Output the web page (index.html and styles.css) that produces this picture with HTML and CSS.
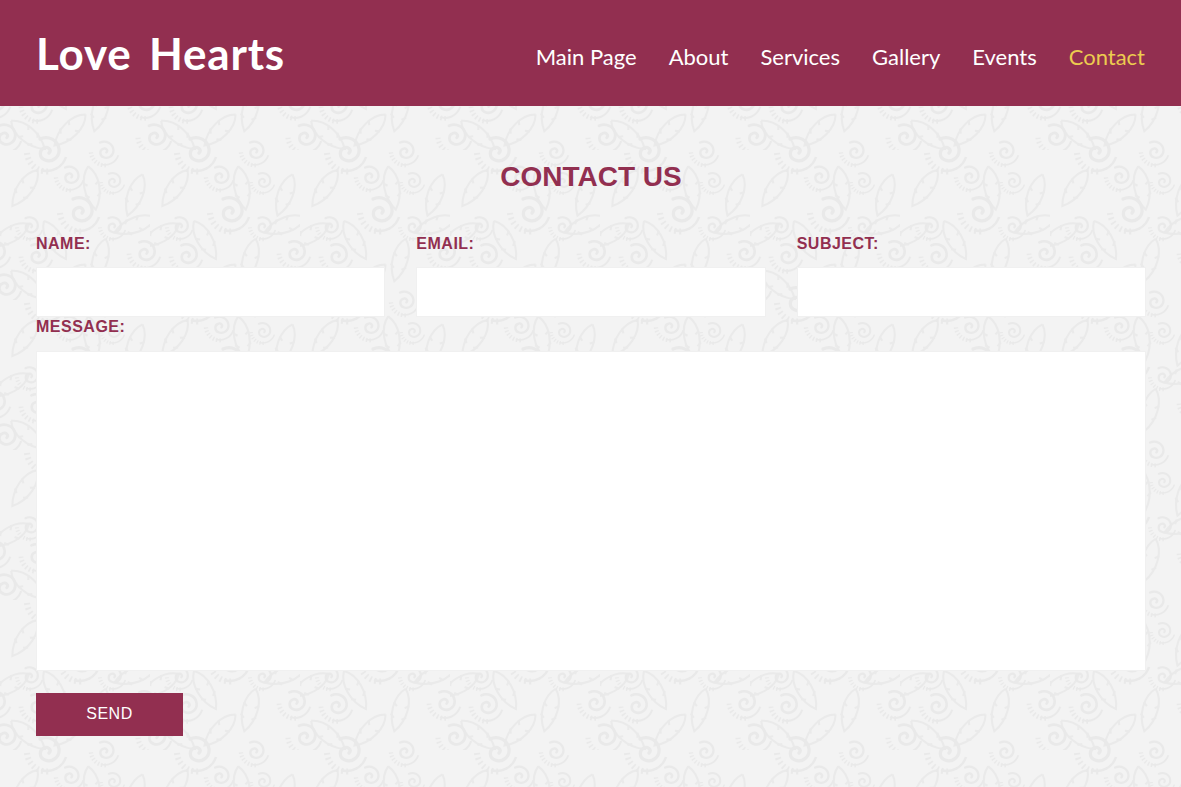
FILE: index.html
```html
<!DOCTYPE html>
<html lang="en">
<head>
    <meta charset="UTF-8">
    <meta name="viewport" content="width=device-width, initial-scale=1.0">
    <title>Love Hearts - Contact</title>
    <link rel="stylesheet" href="styles.css">
</head>
<body>

    <header class="site-header">
        <a class="logo" href="#">Love Hearts</a>
        <nav class="main-nav">
            <a href="#">Main Page</a>
            <a href="#">About</a>
            <a href="#">Services</a>
            <a href="#">Gallery</a>
            <a href="#">Events</a>
            <a class="active" href="#">Contact</a>
        </nav>
    </header>

    <main class="contact">
        <h2>CONTACT US</h2>
        <form>
            <div class="fields">
                <div class="field">
                    <label for="name">NAME:</label>
                    <input type="text" id="name">
                </div>
                <div class="field">
                    <label for="email">EMAIL:</label>
                    <input type="text" id="email">
                </div>
                <div class="field">
                    <label for="subject">SUBJECT:</label>
                    <input type="text" id="subject">
                </div>
            </div>
            <label class="message-label" for="message">MESSAGE:</label>
            <textarea id="message"></textarea>
            <button class="send-button" type="button">SEND</button>
        </form>
    </main>

</body>
</html>
```

FILE: styles.css
```css
body {
    margin: 0;
    font-family: "Liberation Sans", Arial, sans-serif;
    background-color: #f2f2f2;
    background-image: url("data:image/svg+xml,%3Csvg xmlns='http://www.w3.org/2000/svg' xmlns:xlink='http://www.w3.org/1999/xlink' width='150' height='150'%3E%3Cdefs%3E%3Cg id='s' fill='none' stroke='%23e9e9e9'%3E%3Cpath d='M-20 2A20 20 0 0 0 4 20' stroke-width='6' stroke-dasharray='1.8 3'/%3E%3Cpath d='M-6 19A20 20 0 0 0 19 6' stroke-width='2.4'/%3E%3Cpath d='M2 2c3-3-1-7-5-5-5 2-5 10 1 12 7 3 15-3 14-11-1-9-11-14-19-10' stroke-width='3.2' stroke-linecap='round'/%3E%3C/g%3E%3Cg id='l' fill='none' stroke='%23eaeaea' stroke-width='2'%3E%3Cpath d='M0-22C10-12 10 8 0 22C-10 8-10-12 0-22'/%3E%3Cpath d='M-8-6l4 3M8-6l-4 3M-8 6l4 3M8 6l-4 3'/%3E%3C/g%3E%3C/defs%3E%3Crect width='150' height='150' fill='%23f3f3f3'/%3E%3Cuse xlink:href='%23l' transform='translate(25 38) rotate(35)'/%3E%3Cuse xlink:href='%23l' transform='translate(92 38) rotate(-10)'/%3E%3Cuse xlink:href='%23l' transform='translate(135 45) rotate(20)'/%3E%3Cuse xlink:href='%23l' transform='translate(10 85) rotate(60)'/%3E%3Cuse xlink:href='%23l' transform='translate(55 90) rotate(-30)'/%3E%3Cuse xlink:href='%23l' transform='translate(100 110) rotate(15)'/%3E%3Cuse xlink:href='%23l' transform='translate(135 75) rotate(70)'/%3E%3Cuse xlink:href='%23l' transform='translate(70 130) rotate(45)'/%3E%3Cuse xlink:href='%23l' transform='translate(28 135) rotate(-50)'/%3E%3Cuse xlink:href='%23s' transform='translate(5 136) scale(.85)'/%3E%3Cuse xlink:href='%23s' transform='translate(155 136) scale(.85)'/%3E%3Cuse xlink:href='%23s' transform='translate(47 1)'/%3E%3Cuse xlink:href='%23s' transform='translate(47 151)'/%3E%3Cuse xlink:href='%23s' transform='translate(105 1) scale(.7)'/%3E%3Cuse xlink:href='%23s' transform='translate(105 151) scale(.7)'/%3E%3Cuse xlink:href='%23s' transform='translate(70 26) scale(.7)'/%3E%3Cuse xlink:href='%23s' transform='translate(80 61)'/%3E%3Cuse xlink:href='%23s' transform='translate(113 31) scale(.6)'/%3E%3Cuse xlink:href='%23s' transform='translate(30 76) scale(.65)'/%3E%3Cuse xlink:href='%23s' transform='translate(113 76) scale(.65)'/%3E%3Cuse xlink:href='%23s' transform='translate(145 102) scale(.8)'/%3E%3Cuse xlink:href='%23s' transform='translate(-5 102) scale(.8)'/%3E%3Cuse xlink:href='%23s' transform='translate(37 105) scale(.8)'/%3E%3C/svg%3E");
}
.site-header {
    display: flex;
    justify-content: space-between;
    align-items: center;
    height: 106px;
    padding: 0 36px;
    background-color: #922f50;
}
.logo {
    font-family: "Comic Sans MS", Lato, sans-serif;
    font-size: 44px;
    font-weight: bold;
    letter-spacing: 0.8px;
    color: #fff;
    text-decoration: none;
    word-spacing: 6px;
}
.main-nav {
    display: flex;
    gap: 32px;
    margin-top: 6px;
}
.main-nav a {
    font-family: "Comic Sans MS", Lato, sans-serif;
    font-size: 22px;
    color: #fff;
    text-decoration: none;
}
.main-nav a.active {
    color: #eccb4f;
}
.contact {
    padding: 0 35px 0 36px;
}
.contact h2 {
    margin: 0;
    padding-top: 55px;
    font-size: 28px;
    line-height: 32px;
    text-align: center;
    color: #922f50;
}
.fields {
    display: grid;
    grid-template-columns: repeat(3, 1fr);
    gap: 31px;
    margin-top: 42px;
}
label {
    display: block;
    font-size: 16px;
    line-height: 18px;
    font-weight: bold;
    letter-spacing: 0.5px;
    color: #922f50;
}
.field input {
    display: block;
    box-sizing: border-box;
    width: 100%;
    height: 50px;
    margin-top: 14px;
    border: 1px solid #f0f0f0;
    background-color: #fff;
}
.message-label {
    margin-top: 1px;
}
textarea {
    display: block;
    box-sizing: border-box;
    width: 100%;
    height: 320px;
    margin-top: 15px;
    border: 1px solid #f0f0f0;
    background-color: #fff;
    resize: none;
}
.send-button {
    display: block;
    width: 147px;
    height: 43px;
    margin-top: 22px;
    padding-bottom: 3px;
    border: none;
    background-color: #922f50;
    color: #fff;
    font-family: "Liberation Sans", Arial, sans-serif;
    font-size: 16px;
    letter-spacing: 0.5px;
    cursor: pointer;
}
```
